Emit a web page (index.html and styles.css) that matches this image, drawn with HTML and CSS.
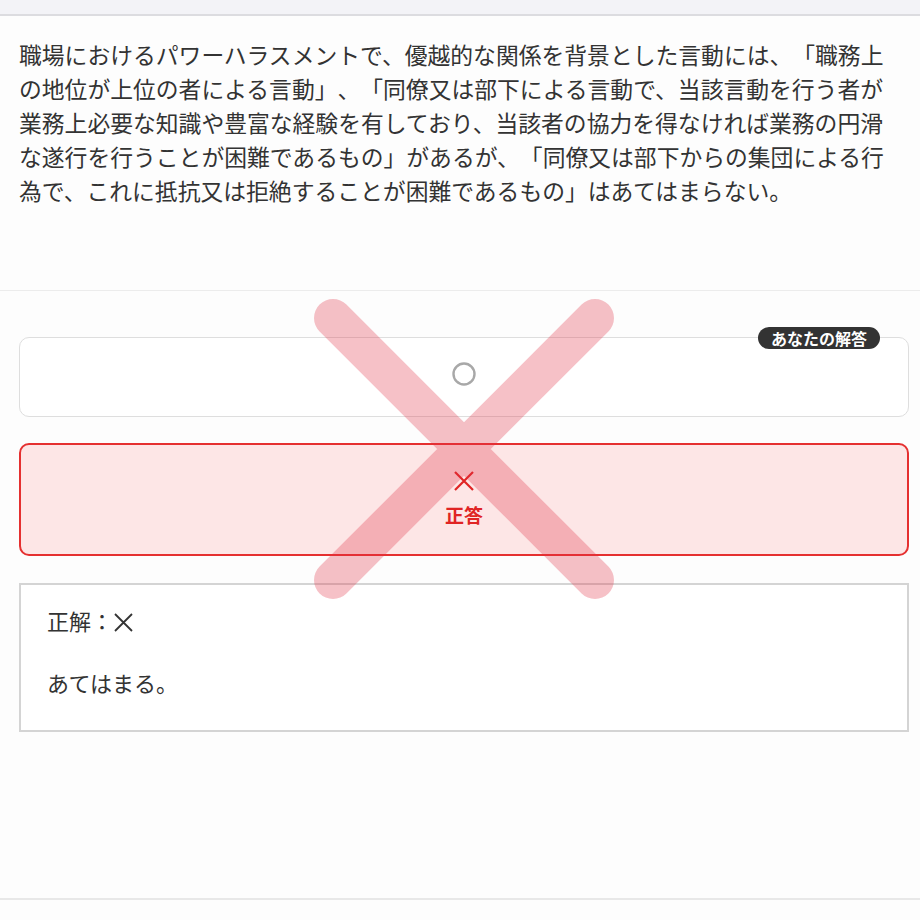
FILE: index.html
```html
<!DOCTYPE html>
<html lang="ja">
<head>
  <meta charset="UTF-8" />
  <meta name="viewport" content="width=device-width, initial-scale=1.0"/>
  <title>解答結果</title>
  <link rel="stylesheet" href="styles.css">
</head>
<body>

  <!-- Top bar -->
  <div class="topbar"></div>

  <!-- Question -->
  <section class="question">
    <p>職場におけるパワーハラスメントで、優越的な関係を背景とした言動には、「職務上の地位が上位の者による言動」、「同僚又は部下による言動で、当該言動を行う者が業務上必要な知識や豊富な経験を有しており、当該者の協力を得なければ業務の円滑な遂行を行うことが困難であるもの」があるが、「同僚又は部下からの集団による行為で、これに抵抗又は拒絶することが困難であるもの」はあてはまらない。</p>
  </section>

  <!-- Answers -->
  <div class="answers">

    <div class="choice">
      <span class="badge">あなたの解答</span>
      <svg class="circle" width="26" height="26" viewBox="0 0 26 26">
        <circle cx="13" cy="13" r="10.5" fill="none" stroke="#a8a8a8" stroke-width="2.4"/>
      </svg>
    </div>

    <div class="choice correct">
      <svg class="cross" width="22" height="22" viewBox="0 0 22 22">
        <path d="M2 2 L20 20 M20 2 L2 20" stroke="#e02424" stroke-width="2.2" fill="none"/>
      </svg>
      <span class="label">正答</span>
    </div>

    <div class="explain">
      <p class="answer">正解：<svg class="cross-small" width="21" height="21" viewBox="0 0 21 21"><path d="M2 2 L19 19 M19 2 L2 19" stroke="#333" stroke-width="1.8" fill="none"/></svg></p>
      <p>あてはまる。</p>
    </div>

    <!-- Result mark over the choices -->
    <svg class="result-mark" width="300" height="300" viewBox="0 0 300 300">
      <path d="M19 19 L281 281 M281 19 L19 281" stroke="rgb(226,50,70)" stroke-opacity="0.3" stroke-width="38" stroke-linecap="round" fill="none"/>
    </svg>
  </div>

  <footer></footer>

</body>
</html>
```

FILE: styles.css
```css
/* General Styling */
body {
  font-family: "Noto Sans CJK JP", "Noto Sans", sans-serif;
  margin: 0;
  padding: 0;
  background: #fdfdfd;
  color: #333;
  text-spacing-trim: space-all;
}

.topbar {
  height: 14px;
  background: #f3f3f7;
  border-bottom: 2px solid #dcdce0;
}

/* Question */
.question {
  padding: 22px 19px 82px;
  border-bottom: 1px solid #ececec;
}

.question p {
  margin: 0;
  font-size: 22.8px;
  line-height: 34px;
}

/* Answers */
.answers {
  position: relative;
  display: flex;
  flex-direction: column;
  gap: 26px;
  padding: 46px 11px 0 19px;
}

.choice {
  position: relative;
  display: flex;
  flex-direction: column;
  align-items: center;
  justify-content: center;
  height: 78px;
  border: 1px solid #dedede;
  border-radius: 10px;
  background: #fff;
}

.circle {
  margin-bottom: 6px;
}

.badge {
  position: absolute;
  top: -11px;
  right: 28px;
  height: 22px;
  padding: 0 13px;
  border-radius: 11px;
  background: #333;
  color: #fff;
  font-size: 16px;
  font-weight: bold;
  line-height: 22px;
}

.choice.correct {
  height: auto;
  padding: 25px 0 27px;
  gap: 11px;
  border: 2px solid #e53030;
  background: #fde6e6;
}

.label {
  color: #e02424;
  font-size: 19px;
  font-weight: bold;
  line-height: 24px;
}

.explain {
  margin-top: 1px;
  padding: 18px 26px 31px;
  border: 2px solid #d4d4d4;
  background: #fff;
}

.explain p {
  margin: 0;
  font-size: 22px;
  line-height: 34px;
}

.explain p + p {
  margin-top: 28px;
}

.cross-small {
  vertical-align: -3px;
}

.result-mark {
  position: absolute;
  left: 314px;
  top: 8px;
}

footer {
  margin-top: 166px;
  height: 20px;
  border-top: 2px solid #e8e8e8;
}
```
